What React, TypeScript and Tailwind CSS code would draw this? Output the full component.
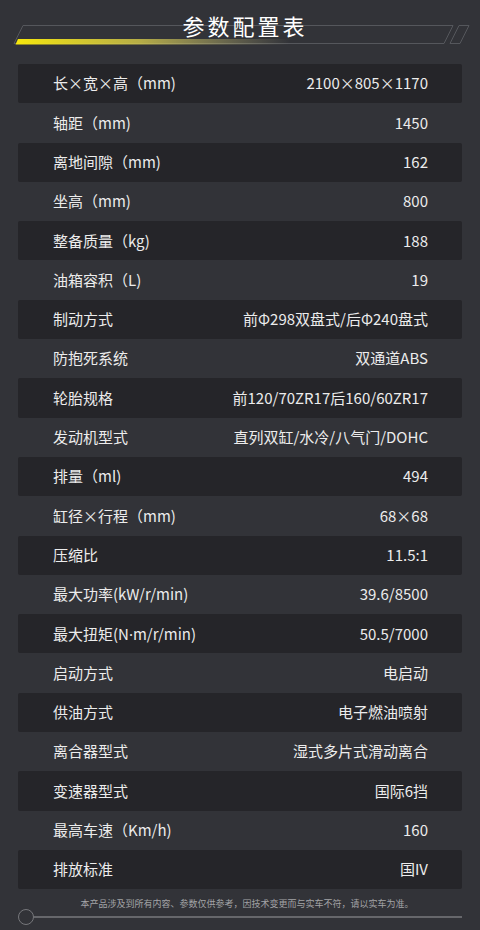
const specs: [string, React.ReactNode][] = [
  ['长×宽×高（mm)', '2100×805×1170'],
  ['轴距（mm)', '1450'],
  ['离地间隙（mm)', '162'],
  ['坐高（mm)', '800'],
  ['整备质量（kg)', '188'],
  ['油箱容积（L)', '19'],
  ['制动方式', '前Φ298双盘式/后Φ240盘式'],
  ['防抱死系统', '双通道ABS'],
  ['轮胎规格', '前120/70ZR17后160/60ZR17'],
  ['发动机型式', '直列双缸/水冷/八气门/DOHC'],
  ['排量（ml)', '494'],
  ['缸径×行程（mm)', '68×68'],
  ['压缩比', '11.5:1'],
  ['最大功率(kW/r/min)', '39.6/8500'],
  ['最大扭矩(N·m/r/min)', '50.5/7000'],
  ['启动方式', '电启动'],
  ['供油方式', '电子燃油喷射'],
  ['离合器型式', '湿式多片式滑动离合'],
  ['变速器型式', '国际6挡'],
  ['最高车速（Km/h)', '160'],
  ['排放标准', '国IV'],
];

// the CJK font draws U+00B7 full width, so the dot gets a latin font
function Label({ text }: { text: string }) {
  const parts = text.split('·');
  if (parts.length === 1) return <span>{text}</span>;
  return (
    <span>
      {parts[0]}
      <span style={{ fontFamily: '"Noto Sans", sans-serif' }}>·</span>
      {parts[1]}
    </span>
  );
}

function Header() {
  return (
    <div className="relative h-[64px]">
      <svg className="absolute inset-0" width="480" height="64" viewBox="0 0 480 64">
        <defs>
          <linearGradient id="yl" x1="0" x2="1" y1="0" y2="0">
            <stop offset="0" stopColor="#f7e80c" />
            <stop offset="0.45" stopColor="#e2d64a" stopOpacity="0.75" />
            <stop offset="1" stopColor="#d8d29a" stopOpacity="0" />
          </linearGradient>
        </defs>
        <polygon points="23,25.5 453,25.5 444,43.5 14,43.5" fill="none" stroke="#55575c" strokeWidth="1" />
        <polygon points="459,25.5 469,25.5 460,43.5 450,43.5" fill="none" stroke="#55575c" strokeWidth="1" />
        <polygon points="18,39 290,39 288,44.5 15.5,44.5" fill="url(#yl)" />
      </svg>
      <div className="relative flex justify-center pt-[9px]">
        <h1 className="text-[22px] leading-[32px] tracking-[3px] pl-[10px] text-white font-normal">
          参数配置表
        </h1>
      </div>
    </div>
  );
}

function Footer() {
  return (
    <div className="px-[18px] pt-[8px]">
      <p className="text-center text-[9px] leading-[14px] text-[#a3a4a7] pl-[14px]">
        本产品涉及到所有内容、参数仅供参考，因技术变更而与实车不符，请以实车为准。
      </p>
      <div className="flex items-center -mt-[2px]">
        <div className="w-[16px] h-[16px] rounded-full border-[1.5px] border-[#76777b] shrink-0" />
        <div className="flex-1 h-[2px] bg-[#66676b]" />
      </div>
    </div>
  );
}

export default function App() {
  return (
    <div
      className="w-[480px] h-[930px] overflow-hidden bg-[#323338] text-[#ececec]"
      style={{ fontFamily: '"Noto Sans CJK SC", "Noto Sans", sans-serif' }}
    >
      <Header />
      <div className="px-[18px]">
        {specs.map(([label, value], i) => (
          <div
            key={label}
            className={
              'flex items-center justify-between h-[39.3px] pl-[35px] pr-[34px] text-[15px] rounded-[2px] ' +
              (i % 2 === 0 ? 'bg-[#252529]' : '')
            }
          >
            <Label text={label} />
            <span>{value}</span>
          </div>
        ))}
      </div>
      <Footer />
    </div>
  );
}
